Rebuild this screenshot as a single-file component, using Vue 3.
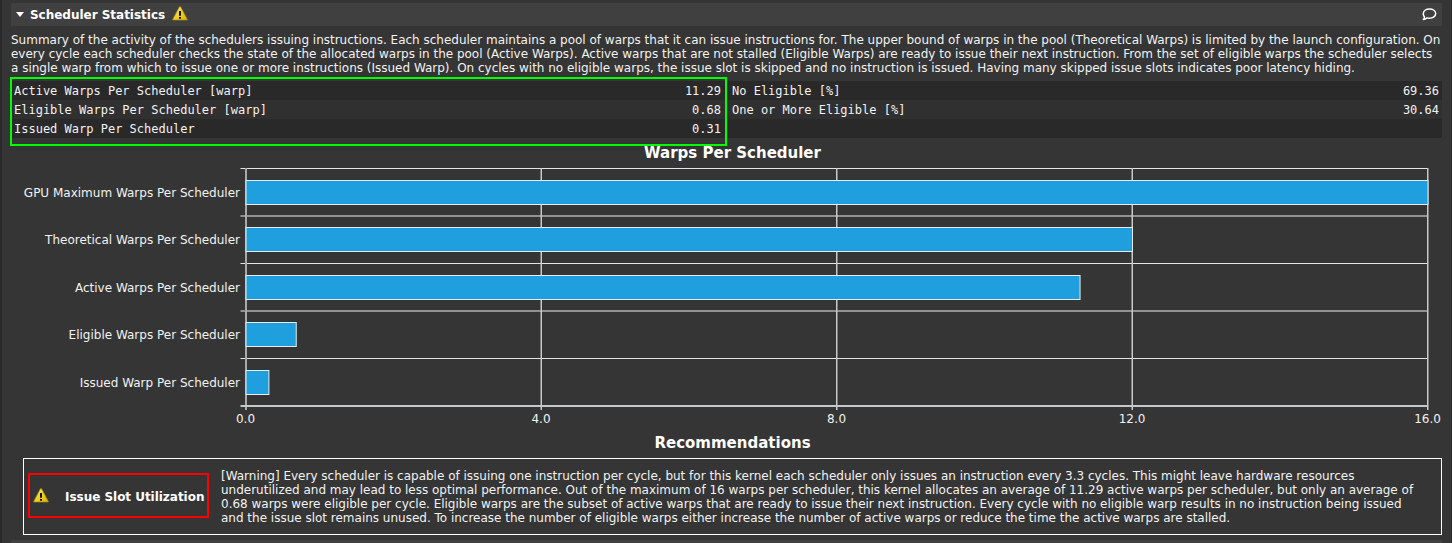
<script setup>
const summary = [
  'Summary of the activity of the schedulers issuing instructions. Each scheduler maintains a pool of warps that it can issue instructions for. The upper bound of warps in the pool (Theoretical Warps) is limited by the launch configuration. On',
  'every cycle each scheduler checks the state of the allocated warps in the pool (Active Warps). Active warps that are not stalled (Eligible Warps) are ready to issue their next instruction. From the set of eligible warps the scheduler selects',
  'a single warp from which to issue one or more instructions (Issued Warp). On cycles with no eligible warps, the issue slot is skipped and no instruction is issued. Having many skipped issue slots indicates poor latency hiding.',
]

const metrics = [
  ['Active Warps Per Scheduler [warp]', '11.29', 'No Eligible [%]', '69.36'],
  ['Eligible Warps Per Scheduler [warp]', '0.68', 'One or More Eligible [%]', '30.64'],
  ['Issued Warp Per Scheduler', '0.31', '', ''],
]

const left = 246
const unit = 295.5 / 4
const bars = [
  { label: 'GPU Maximum Warps Per Scheduler', value: 16, y: 20 },
  { label: 'Theoretical Warps Per Scheduler', value: 12, y: 67 },
  { label: 'Active Warps Per Scheduler', value: 11.29, y: 115 },
  { label: 'Eligible Warps Per Scheduler', value: 0.68, y: 162 },
  { label: 'Issued Warp Per Scheduler', value: 0.31, y: 210 },
]
const rules = [8.5, 56, 103.5, 151, 198.5]
const ticks = [0, 4, 8, 12, 16]

const warning = [
  '[Warning] Every scheduler is capable of issuing one instruction per cycle, but for this kernel each scheduler only issues an instruction every 3.3 cycles. This might leave hardware resources',
  'underutilized and may lead to less optimal performance. Out of the maximum of 16 warps per scheduler, this kernel allocates an average of 11.29 active warps per scheduler, but only an average of',
  '0.68 warps were eligible per cycle. Eligible warps are the subset of active warps that are ready to issue their next instruction. Every cycle with no eligible warp results in no instruction being issued',
  'and the issue slot remains unused. To increase the number of eligible warps either increase the number of active warps or reduce the time the active warps are stalled.',
]
</script>

<template>
  <main class="panel">
    <header class="bar">
      <svg class="caret" width="8" height="5" viewBox="0 0 8 5"><path d="M0 0H8L4 5Z" fill="#fff" /></svg>
      <h1>Scheduler Statistics</h1>
      <svg class="warn" width="16" height="15" viewBox="0 0 16 15">
        <defs>
          <linearGradient id="gold" x1="0" y1="0" x2="1" y2="1">
            <stop offset="0" stop-color="#fff27a" /><stop offset=".5" stop-color="#f2d322" /><stop offset="1" stop-color="#d9b400" />
          </linearGradient>
        </defs>
        <path d="M7.4 .8H8.6L15.3 13.5V14H.7V13.5Z" fill="url(#gold)" stroke="#a98a1c" stroke-width=".7" />
        <path d="M7 5H9V9.8H7ZM7 11H9V12.7H7Z" fill="#111" />
      </svg>
      <svg class="bubble" width="15" height="13" viewBox="0 0 15 13">
        <path d="M1.3 11.4C2.4 10.7 2.6 9.800 2.400 8.800C1.600 8 1.300 6.900 1.300 5.700C1.300 2.900 4.100 1 7.500 1C10.900 1 13.700 2.900 13.700 5.600C13.700 8.300 10.900 10.300 7.500 10.300C6.600 10.300 5.800 10.200 5 9.900C4 10.800 2.700 11.400 1.300 11.400Z" fill="none" stroke="#fff" stroke-width="1.500" stroke-linejoin="round" />
      </svg>
    </header>

    <p class="summary"><span v-for="line in summary" :key="line">{{ line }}</span></p>

    <section class="metrics">
      <div v-for="row in metrics" :key="row[0]" class="row">
        <div class="cell first"><span>{{ row[0] }}</span><span>{{ row[1] }}</span></div>
        <div class="cell"><span>{{ row[2] }}</span><span>{{ row[3] }}</span></div>
      </div>
      <div class="highlight"></div>
    </section>

    <h2 class="chart-title">Warps Per Scheduler</h2>
    <svg class="chart" width="1452" height="270" viewBox="0 0 1452 270">
      <g v-for="(y, i) in rules" :key="y">
        <rect v-if="i % 2 === 0" x="240.500" :y="y - 0.5" width="1187.500" height="1" fill="#e4e4e4" />
        <rect v-else x="240.500" :y="y - 1" width="1187.500" height="2" fill="#919191" />
      </g>
      <g v-for="t in ticks" :key="t">
        <rect :x="left + t * unit - 1" y="8" :width="t ? 1.5 : 2" height="242" :fill="t ? '#c8c8c8' : '#a9a9a9'" />
        <text :x="left + t * unit - 0.5" y="263" text-anchor="middle">{{ t.toFixed(1) }}</text>
      </g>
      <rect x="240.500" y="245" width="1187.500" height="2" fill="#c4c8c8" />
      <g v-for="b in bars" :key="b.label">
        <rect :x="left" :y="b.y + 0.5" :width="b.value * unit" height="24" fill="#209fdf" stroke="#e6ebee" stroke-width="1" />
        <text x="240" :y="b.y + 17" text-anchor="end">{{ b.label }}</text>
      </g>
    </svg>

    <h2 class="rec-title">Recommendations</h2>
    <section class="recommendation">
      <div class="issue">
        <svg width="16" height="15" viewBox="0 0 16 15">
          <path d="M7.4 .8H8.6L15.3 13.5V14H.7V13.5Z" fill="url(#gold)" stroke="#a98a1c" stroke-width=".7" />
          <path d="M7 5H9V9.800H7ZM7 11H9V12.700H7Z" fill="#111" />
        </svg>
        <strong>Issue Slot Utilization</strong>
      </div>
      <p><span v-for="line in warning" :key="line">{{ line }}</span></p>
    </section>
    <div class="next"></div>
  </main>
</template>

<style>
body { margin: 0; background: #353535; overflow: hidden; }
</style>

<style scoped>
.panel {
  box-sizing: border-box;
  width: 1452px;
  height: 543px;
  padding: 3px 9px 0 9px;
  border-left: 2px solid #292929;
  border-right: 1px solid #292929;
  background: #353535;
  color: #f2f2f2;
  font: 12px/14px "DejaVu Sans", sans-serif;
  overflow: hidden;
}
h1, h2, p { margin: 0; }
h1 { font-size: 12px; line-height: 14px; color: #fff; margin-left: 6px; letter-spacing: -0.02px; }
h2 { font-size: 15px; line-height: 18px; padding-left: 12px; text-align: center; color: #fff; }
.bar { display: flex; align-items: center; height: 23px; padding: 0 5px; background: #404040; }
.warn { margin: -3px 0 0 7px; }
.bubble { margin-left: auto; }
.summary { margin-top: 7px; }
p span { display: block; white-space: pre; letter-spacing: -0.008px; }
.metrics { position: relative; margin-top: 6px; font-family: "DejaVu Sans Mono", monospace; }
.row { display: flex; height: 19px; line-height: 21px; background: #303030; }
.row:nth-child(odd) { background: #292929; }
.cell { flex: 1; display: flex; justify-content: space-between; padding: 0 3px 0 5px; white-space: pre; }
.cell.first { flex: 0 0 707px; padding-left: 3px; padding-right: 6px; }
.highlight { position: absolute; left: -1px; top: -4px; width: 713px; height: 65px; border: 2px solid #00ff00; }
.chart-title { margin-top: 6px; }
.chart { display: block; margin: -2px 0 0 -11px; fill: #f2f2f2; }
.rec-title { margin-top: 4px; }
.recommendation {
  box-sizing: border-box;
  display: flex;
  align-items: center;
  height: 77px;
  margin: 6px 0 0 12px;
  border: 1px solid #fff;
}
.issue {
  box-sizing: border-box;
  display: flex;
  align-items: center;
  width: 181px;
  height: 45px;
  margin: -2px 0 0 4px;
  padding-left: 3px;
  border: 2px solid #ff0000;
  border-radius: 1px;
}
.issue svg { flex: none; margin-top: -1px; }
.issue strong { margin: 2px 0 0 16px; color: #fff; white-space: nowrap; letter-spacing: -0.03px; }
.recommendation p { margin-left: 12px; }
.next { height: 6px; margin-top: 5px; background: #404040; }
</style>
